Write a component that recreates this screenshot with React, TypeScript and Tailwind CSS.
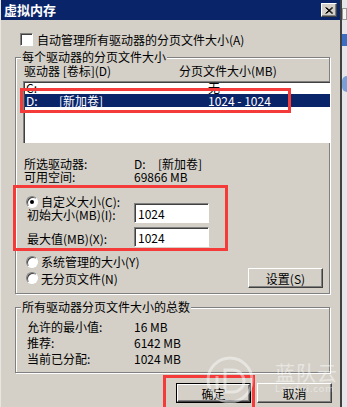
import React from "react";

const FONT = { fontFamily: '"Noto Sans CJK SC", "Liberation Sans", sans-serif' };

function Radio({ checked = false }: { checked?: boolean }) {
  return (
    <span className="relative flex h-[12px] w-[12px] shrink-0 items-center justify-center rounded-full border border-t-[#808080] border-l-[#808080] border-r-white border-b-white bg-white shadow-[inset_1px_1px_0_#404040]">
      {checked && <span className="h-[4px] w-[4px] rounded-full bg-black" />}
    </span>
  );
}

function Btn({ label, isDefault = false }: { label: string; isDefault?: boolean }) {
  return (
    <div className={"h-[20px] w-[75px] " + (isDefault ? "border border-black" : "")}>
      <div className="flex h-full w-full items-center justify-center border border-t-white border-l-white border-r-[#404040] border-b-[#404040] bg-[#d4d0c8] text-[12px] leading-[13px] text-black shadow-[inset_-1px_-1px_0_#808080]">
        {label}
      </div>
    </div>
  );
}

function Field({ value }: { value: string }) {
  return (
    <div className="flex h-[20px] w-[75px] items-center border border-t-[#808080] border-l-[#808080] border-r-white border-b-white bg-white pl-[3px] text-[12px] leading-[13px] shadow-[inset_1px_1px_0_#404040]">
      {value}
    </div>
  );
}

function Group({ title, height, children }: { title: string; height: number; children: React.ReactNode }) {
  return (
    <div
      className="relative ml-[14px] w-[315px] border border-[#808080] shadow-[inset_1px_1px_0_#fff,1px_1px_0_#fff]"
      style={{ height }}
    >
      <span className="absolute left-[5px] top-[-8px] bg-[#d4d0c8] px-[1px] text-[12px] leading-[13px]">{title}</span>
      {children}
    </div>
  );
}

export default function App() {
  return (
    <div className="relative flex h-[407px] w-[347px] overflow-hidden bg-[#d4d0c8] text-black" style={FONT}>
      {/* dialog */}
      <div className="flex h-full w-[342px] flex-col border-r-2 border-r-[#404040] border-l border-l-[#e8e6e2] bg-[#d4d0c8]">
        <div className="flex h-[20px] items-center justify-between bg-[#0a246a] pl-[3px] pr-[3px]">
          <span className="text-[13px] font-bold leading-[14px] text-white">虚拟内存</span>
          <div className="flex h-[14px] w-[16px] items-center justify-center border border-t-white border-l-white border-r-[#404040] border-b-[#404040] bg-[#d4d0c8] shadow-[inset_-1px_-1px_0_#808080]">
            <svg width="8" height="7" viewBox="0 0 8 7">
              <path d="M0.5 0.5 L7 6.5 M1.5 0.5 L8 6.5 M7 0.5 L0.5 6.5 M8 0.5 L1.5 6.5" stroke="#000" strokeWidth="1" />
            </svg>
          </div>
        </div>

        {/* auto manage */}
        <div className="ml-[19px] mt-[13px] flex h-[13px] items-center gap-[4px] text-[12px] leading-[13px]">
          <span className="h-[13px] w-[13px] border border-t-[#808080] border-l-[#808080] border-r-white border-b-white bg-white shadow-[inset_1px_1px_0_#404040]" />
          <span>自动管理所有驱动器的分页文件大小(A)</span>
        </div>

        <div className="mt-[11px]">
          <Group title="每个驱动器的分页文件大小" height={237}>
            <div className="mt-[6px] flex h-[13px] pl-[8px] text-[12px] leading-[13px]">
              <span className="w-[155px]">驱动器 [卷标](D)</span>
              <span>分页文件大小(MB)</span>
            </div>

            <div className="ml-[7px] mt-[4px] h-[62px] w-[307px] overflow-hidden border-l border-t border-[#808080] bg-white text-[12px] shadow-[inset_1px_1px_0_#404040]">
              <div className="flex h-[12px] items-end overflow-hidden pl-[2px] leading-[13px]">
                <span className="w-[182px]">C:</span>
                <span>无</span>
              </div>
              <div className="ml-[1px] flex h-[13px] items-center bg-[#0a246a] pl-[1px] leading-[13px] text-white">
                <span className="w-[33px]">D:</span>
                <span className="w-[149px]">[新加卷]</span>
                <span>1024 - 1024</span>
              </div>
            </div>

            <div className="mt-[14px] flex h-[13px] pl-[8px] text-[12px] leading-[13px]">
              <span className="w-[110px]">所选驱动器:</span>
              <span className="w-[24px]">D:</span>
              <span>[新加卷]</span>
            </div>
            <div className="flex h-[13px] pl-[8px] text-[12px] leading-[13px]">
              <span className="w-[110px]">可用空间:</span>
              <span>69866 MB</span>
            </div>

            <div className="mt-[12px] flex h-[13px] items-center gap-[3px] pl-[10px] text-[12px] leading-[13px]">
              <Radio checked />
              <span>自定义大小(C):</span>
            </div>
            <div className="mt-[-5px] flex h-[20px] items-center pl-[11px] text-[12px] leading-[13px]">
              <span className="w-[107px] pt-[3px]">初始大小(MB)(I):</span>
              <Field value="1024" />
            </div>
            <div className="mt-[4px] flex h-[20px] items-center pl-[11px] text-[12px] leading-[13px]">
              <span className="w-[107px] pt-[3px]">最大值(MB)(X):</span>
              <Field value="1024" />
            </div>

            <div className="mt-[8px] flex h-[13px] items-center gap-[3px] pl-[10px] text-[12px] leading-[13px]">
              <Radio />
              <span>系统管理的大小(Y)</span>
            </div>
            <div className="flex h-[20px] items-center pl-[10px] pr-[6px] text-[12px] leading-[13px]">
              <Radio />
              <span className="ml-[3px]">无分页文件(N)</span>
              <div className="ml-auto">
                <Btn label="设置(S)" />
              </div>
            </div>
          </Group>
        </div>

        <div className="mt-[13px]">
          <Group title="所有驱动器分页文件大小的总数" height={66}>
            <div className="mt-[11px] text-[12px] leading-[16px]">
              <div className="flex h-[16px] pl-[11px]">
                <span className="w-[107px]">允许的最小值:</span>
                <span>16 MB</span>
              </div>
              <div className="flex h-[16px] pl-[11px]">
                <span className="w-[107px]">推荐:</span>
                <span>6142 MB</span>
              </div>
              <div className="flex h-[16px] pl-[11px]">
                <span className="w-[107px]">当前已分配:</span>
                <span>1024 MB</span>
              </div>
            </div>
          </Group>
        </div>

        <div className="mt-[10px] flex justify-end gap-[6px] pr-[8px]">
          <Btn label="确定" isDefault />
          <Btn label="取消" />
        </div>
      </div>

      {/* neighbouring window edge */}
      <div className="flex h-full w-[5px] flex-col bg-[#e4e6ea]">
        <div className="mt-[8px] h-[12px] border border-[#9a9a9a] bg-[#f4f4f4]" />
        <div className="mt-[14px] h-[12px] bg-[#3a6fc4]" />
        <div className="mt-[30px] h-[16px] rounded-l-full bg-[#7aa0d8]" />
      </div>

      {/* red highlight boxes */}
      <div className="pointer-events-none absolute left-[20px] top-[88px] h-[25px] w-[271px] border-[3px] border-[#f53a3a]" />
      <div className="pointer-events-none absolute left-[13px] top-[185px] h-[66px] w-[215px] border-[3px] border-[#f53a3a]" />
      <div className="pointer-events-none absolute left-[163px] top-[375px] h-[40px] w-[92px] border-[3px] border-[#f53a3a]" />

      {/* watermark */}
      <div className="pointer-events-none absolute left-[205px] top-[352px] flex items-start gap-[20px] opacity-45">
        <svg width="50" height="56" viewBox="0 0 50 56">
          <circle cx="25" cy="28" r="22" fill="none" stroke="#fff" strokeWidth="3" />
          <path d="M20 18 L20 40 L28 40 A11 11 0 0 0 28 18 Z" fill="none" stroke="#fff" strokeWidth="3" />
          <path d="M12 24 L12 40" stroke="#fff" strokeWidth="3" />
        </svg>
        <div className="mt-[10px] flex flex-col items-start">
          <span className="text-[20px] leading-[22px] tracking-[1px] text-white">蓝队云</span>
          <span className="text-[9px] leading-[10px] tracking-[1px] text-white">Landui.com</span>
        </div>
      </div>
    </div>
  );
}
